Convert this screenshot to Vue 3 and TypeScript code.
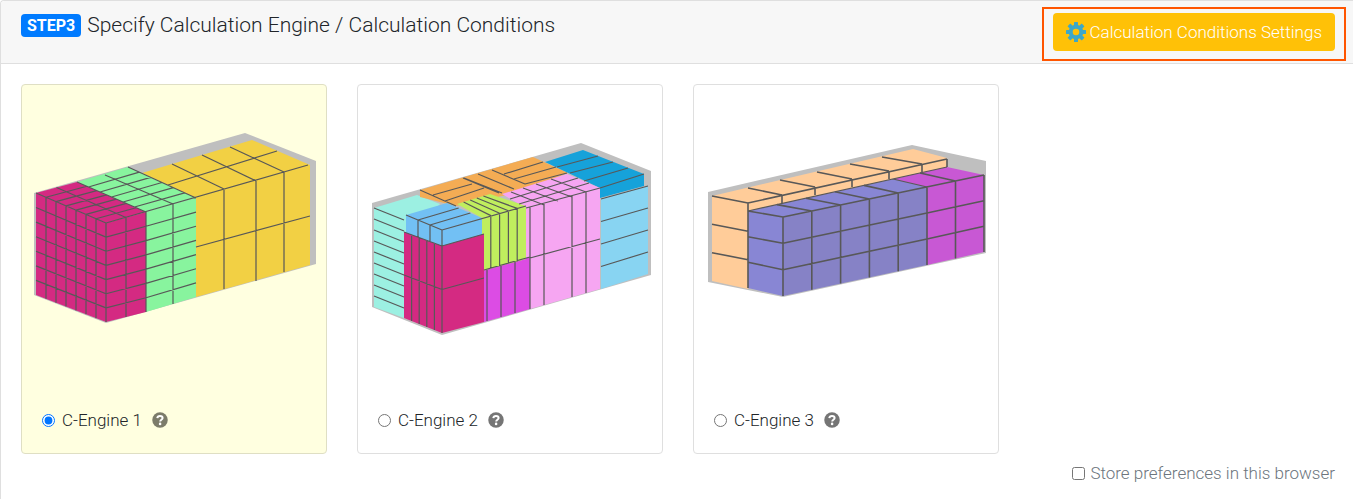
<script setup lang="ts">
import { ref } from 'vue'

type Point = [number, number]
type Quad = [Point, Point, Point, Point]

interface Shape {
  points: string
  fill: string
}

interface Drawing {
  viewBox: string
  shapes: Shape[]
  lines: string
  bold: string
}

interface Engine {
  id: string
  name: string
  drawing: Drawing
}

const colors = {
  wall: '#bfbfbf',
  magenta: '#d42a82',
  green: '#88f49e',
  yellow: '#f2d044',
  teal: '#9cf0e2',
  blue: '#72c0f4',
  orange: '#f4ac54',
  ocean: '#16a2da',
  sky: '#88d4f2',
  lime: '#c0ee5e',
  purple: '#dc4ce4',
  pink: '#f6a6f2',
  peach: '#ffcc99',
  violetTop: '#8886d4',
  violet: '#8682c6',
  orchid: '#c858d4',
}

const poly = (fill: string, ...points: Point[]): Shape => ({
  fill,
  points: points.map((p) => p.join(',')).join(' '),
})

const seg = (a: Point, b: Point): string => `M${a[0]} ${a[1]}L${b[0]} ${b[1]}`

const mix = (a: Point, b: Point, t: number): Point => [
  a[0] + (b[0] - a[0]) * t,
  a[1] + (b[1] - a[1]) * t,
]

// Box edges inside a face, the corners being given clockwise.
function mesh(q: Quad, cols: number, rows: number): string {
  const out: string[] = []
  for (let i = 1; i < cols; i++) {
    out.push(seg(mix(q[0], q[1], i / cols), mix(q[3], q[2], i / cols)))
  }
  for (let j = 1; j < rows; j++) {
    out.push(seg(mix(q[0], q[3], j / rows), mix(q[1], q[2], j / rows)))
  }
  return out.join('')
}

function drawLayered(): Drawing {
  const mLeft: Quad = [[36, 193], [106, 223], [106, 322], [36, 295]]
  const mRight: Quad = [[106, 223], [146, 212], [146, 312], [106, 322]]
  const mTop: Quad = [[36, 193], [77, 182], [146, 212], [106, 223]]
  const gTop: Quad = [[77, 182], [128, 167], [196, 198], [146, 212]]
  const gRight: Quad = [[146, 212], [196, 198], [196, 297], [146, 312]]
  return {
    viewBox: '22 85 304 300',
    shapes: [
      poly(colors.wall, [34, 193], [245, 133], [316, 161], [316, 264], [106, 323], [34, 295]),
      poly(colors.yellow, [142, 173], [252, 140], [310, 165], [310, 265], [196, 297], [196, 198]),
      poly(colors.green, ...gTop),
      poly(colors.green, ...gRight),
      poly(colors.magenta, ...mTop),
      poly(colors.magenta, ...mLeft),
      poly(colors.magenta, ...mRight),
    ],
    lines: [
      mesh(mLeft, 7, 7),
      mesh(mRight, 2, 7),
      mesh(mTop, 2, 7),
      mesh(gTop, 1, 6),
      mesh(gRight, 1, 7),
      seg([105, 175], [173, 204]),
      seg([173, 204], [173, 304]),
      seg([36, 193], [106, 223]),
      seg([106, 223], [308, 165]),
      seg([106, 223], [106, 322]),
      seg([77, 182], [146, 212]),
      seg([128, 167], [196, 198]),
      seg([146, 212], [146, 312]),
      seg([168, 185], [277, 151]),
      seg([172, 164], [224, 189]),
      seg([202, 155], [256, 181]),
      seg([230, 147], [284, 172]),
      seg([224, 189], [224, 289]),
      seg([256, 181], [256, 281]),
      seg([284, 172], [284, 272]),
      seg([196, 247], [310, 216]),
    ].join(''),
    bold: '',
  }
}

function drawMixed(): Drawing {
  const blueLeft: Quad = [[406, 215], [442, 230], [442, 246], [406, 233]]
  const blueTop: Quad = [[406, 215], [447, 203], [482, 218], [442, 230]]
  const mLeft: Quad = [[404, 232], [442, 246], [442, 333], [404, 318]]
  const mRight: Quad = [[442, 246], [484, 234], [484, 322], [442, 333]]
  const limeTop: Quad = [[457, 204], [490, 194], [526, 206], [482, 218]]
  const limeFront: Quad = [[482, 218], [526, 206], [526, 259], [482, 271]]
  const sky: Quad = [[601, 199], [648, 186], [648, 274], [601, 289]]
  const tealLines = Array.from({ length: 9 }, (_, i) => {
    const y = 208 + i * 11
    return seg([374, y], [404, y + 12])
  })
  return {
    viewBox: '358 85 304 300',
    shapes: [
      poly(colors.wall, [372, 203], [581, 143], [651, 171], [651, 275], [442, 335], [372, 307]),
      poly(colors.teal, [374, 208], [417, 195], [440, 204], [406, 240], [404, 318], [374, 307]),
      poly(colors.orange, [420, 190], [533, 157], [568, 173], [520, 192], [456, 206], [420, 197]),
      poly(colors.ocean, [545, 162], [583, 150], [644, 174], [644, 186], [600, 198], [600, 188]),
      poly(colors.sky, ...sky),
      poly(colors.pink, [502, 194], [567, 174], [600, 188], [600, 289], [530, 309], [526, 259], [526, 208]),
      poly(colors.purple, [484, 270], [530, 257], [530, 309], [484, 322]),
      poly(colors.lime, ...limeTop),
      poly(colors.lime, ...limeFront),
      poly(colors.blue, ...blueTop),
      poly(colors.blue, ...blueLeft),
      poly(colors.blue, [442, 230], [482, 218], [482, 235], [442, 246]),
      poly(colors.magenta, ...mLeft),
      poly(colors.magenta, ...mRight),
    ],
    lines: [
      ...tealLines,
      mesh(blueLeft, 3, 1),
      mesh(blueTop, 1, 3),
      seg([406, 215], [442, 230]),
      seg([442, 230], [526, 206]),
      seg([442, 230], [442, 333]),
      seg([404, 232], [442, 246]),
      seg([442, 246], [484, 234]),
      mesh(mLeft, 5, 2),
      mesh(mRight, 1, 2),
      mesh(limeTop, 5, 1),
      mesh(limeFront, 5, 1),
      seg([420, 190], [456, 206]),
      seg([433, 195], [472, 184]),
      seg([445, 201], [484, 188]),
      seg([463, 178], [499, 193]),
      seg([464, 178], [502, 193]),
      seg([478, 174], [514, 189]),
      seg([492, 170], [525, 184]),
      seg([504, 174], [543, 162]),
      seg([514, 179], [556, 167]),
      seg([525, 184], [567, 173]),
      seg([557, 167], [598, 156]),
      seg([570, 173], [613, 162]),
      seg([584, 181], [628, 168]),
      seg([600, 188], [644, 174]),
      mesh(sky, 1, 4),
      seg([601, 199], [648, 186]),
      seg([526, 208], [600, 188]),
      seg([519, 204], [589, 183]),
      seg([510, 199], [578, 178]),
      seg([511, 192], [544, 205]),
      seg([523, 188], [558, 201]),
      seg([536, 184], [572, 197]),
      seg([551, 179], [586, 192]),
      seg([530, 207], [530, 309]),
      seg([544, 203], [544, 305]),
      seg([572, 196], [572, 297]),
      seg([586, 192], [586, 293]),
      seg([530, 258], [600, 239]),
      seg([484, 270], [530, 257]),
      seg([487, 270], [487, 321]),
      seg([501, 266], [501, 317]),
      seg([515, 262], [515, 313]),
    ].join(''),
    bold: '',
  }
}

function drawRows(): Drawing {
  const vTop: Quad = [[748, 211], [893, 179], [927, 187], [783, 217]]
  const vFront: Quad = [[783, 217], [927, 187], [927, 265], [783, 296]]
  const vLeft: Quad = [[748, 211], [783, 217], [783, 296], [748, 288]]
  const oTop: Quad = [[893, 179], [947, 167], [984, 175], [927, 187]]
  const oFront: Quad = [[927, 187], [984, 175], [984, 252], [927, 265]]
  const pLeft: Quad = [[712, 196], [748, 203], [748, 288], [712, 281]]
  const crossings: [Point, Point][] = [
    [[748, 188], [782, 195]],
    [[780, 180], [815, 187]],
    [[817, 172], [852, 179]],
    [[850, 164], [889, 171]],
    [[882, 157], [922, 164]],
  ]
  return {
    viewBox: '694 85 304 300',
    shapes: [
      poly(colors.wall, [708, 192], [912, 145], [986, 161], [986, 253], [783, 297], [708, 282]),
      poly(colors.peach, [712, 196], [913, 149], [947, 158], [947, 168], [748, 212], [748, 289], [712, 281]),
      poly(colors.violetTop, ...vTop),
      poly(colors.violetTop, ...vLeft),
      poly(colors.violet, ...vFront),
      poly(colors.orchid, ...oTop),
      poly(colors.orchid, ...oFront),
    ],
    lines: [
      seg([748, 211], [947, 167]),
      seg([893, 179], [927, 187]),
    ].join(''),
    bold: [
      mesh(pLeft, 1, 3),
      seg([712, 196], [748, 203]),
      seg([748, 203], [947, 159]),
      seg([748, 203], [748, 288]),
      seg([947, 159], [947, 167]),
      ...crossings.map(([a, b]) => seg(a, b) + seg(b, [b[0], b[1] + 8])),
      mesh(vTop, 5, 1),
      mesh(vLeft, 1, 3),
      mesh(vFront, 5, 3),
      mesh(oTop, 2, 1),
      mesh(oFront, 2, 3),
      seg([748, 211], [783, 217]),
      seg([783, 217], [984, 175]),
      seg([783, 217], [783, 296]),
      seg([927, 187], [927, 265]),
      seg([984, 175], [984, 252]),
    ].join(''),
  }
}

const engines: Engine[] = [
  { id: 'engine-1', name: 'C-Engine 1', drawing: drawLayered() },
  { id: 'engine-2', name: 'C-Engine 2', drawing: drawMixed() },
  { id: 'engine-3', name: 'C-Engine 3', drawing: drawRows() },
]

const selected = ref('engine-1')
const store = ref(false)
const teeth = [0, 45, 90, 135, 180, 225, 270, 315]
</script>

<template>
  <section class="panel">
    <header class="panel-header">
      <h1 class="title"><span class="badge">STEP3</span>Specify Calculation Engine / Calculation Conditions</h1>
      <div class="highlight">
        <button type="button" class="settings">
          <svg class="gear" viewBox="0 0 20 20" aria-hidden="true">
            <rect v-for="a in teeth" :key="a" x="8" y="0" width="4" height="4" rx="0.5" :transform="`rotate(${a} 10 10)`" />
            <circle class="ring" cx="10" cy="10" r="5.3" />
          </svg>
          Calculation Conditions Settings
        </button>
      </div>
    </header>

    <div class="panel-body">
      <div class="engines">
        <article v-for="e in engines" :key="e.id" class="card" :class="{ active: selected === e.id }">
          <svg class="drawing" :viewBox="e.drawing.viewBox" aria-hidden="true">
            <polygon v-for="(s, i) in e.drawing.shapes" :key="i" :points="s.points" :fill="s.fill" />
            <path class="edges" :d="e.drawing.lines" />
            <path class="edges bold" :d="e.drawing.bold" />
          </svg>
          <div class="choice">
            <input :id="e.id" v-model="selected" type="radio" name="engine" :value="e.id" />
            <label :for="e.id">{{ e.name }}</label>
            <svg class="help" viewBox="0 0 16 16" aria-hidden="true">
              <circle cx="8" cy="8" r="7.75" />
              <path d="M5.3 6.1C5.5 4.5 6.6 3.9 8 3.9C9.5 3.9 10.6 4.7 10.6 6C10.6 7.8 8.2 7.7 8.2 9.5" />
              <circle class="dot" cx="8.1" cy="11.9" r="1.3" />
            </svg>
          </div>
        </article>
      </div>
      <div class="store">
        <input id="store" v-model="store" type="checkbox" />
        <label for="store">Store preferences in this browser</label>
      </div>
    </div>
  </section>
</template>

<style>
body {
  margin: 0;
  background: #fff;
}
</style>

<style scoped>
.panel {
  border: 1px solid #dfdfdf;
  border-right: 0;
  border-bottom: 0;
  border-radius: 4px 0 0 0;
  color: #212529;
  font-family: Roboto, "Noto Sans", sans-serif;
  font-size: 17px;
  font-weight: 300;
  line-height: 24px;
}

.panel-header {
  display: flex;
  justify-content: space-between;
  align-items: flex-start;
  padding: 6px 7px 2px 20px;
  background: #f7f7f7;
  border-bottom: 1px solid #dfdfdf;
  border-radius: 4px 0 0 0;
}

.title {
  display: flex;
  align-items: center;
  gap: 6px;
  margin: 6px 0 0;
  font-size: 21px;
  font-weight: 300;
  line-height: 24px;
}

.badge {
  padding: 0 6px;
  border-radius: 4px;
  background: #007bff;
  color: #fff;
  font-size: 16px;
  font-weight: 700;
  line-height: 23px;
}

.highlight {
  padding: 4px 9px 8px;
  border: 2px solid #ff5500;
}

.settings {
  display: flex;
  align-items: center;
  gap: 4px;
  padding: 7px 13px;
  border: 0;
  border-radius: 4px;
  background: #ffc107;
  color: #fff;
  font: inherit;
}

.gear {
  width: 20px;
  height: 20px;
  fill: #3da8c8;
}

.gear .ring {
  fill: none;
  stroke: #3da8c8;
  stroke-width: 4;
}

.panel-body {
  padding: 20px 18px 14px 20px;
}

.engines {
  display: grid;
  grid-template-columns: repeat(4, 1fr);
  gap: 30px;
}

.card {
  border: 1px solid #dfdfdf;
  border-radius: 4px;
}

.card.active {
  background: #ffffe0;
  border-color: #dfdfc4;
}

.drawing {
  display: block;
  width: 100%;
}

.edges {
  fill: none;
  stroke: #585858;
  stroke-width: 1.2;
}

.edges.bold {
  stroke-width: 1.6;
}

.choice {
  display: flex;
  align-items: center;
  padding: 23px 20px 21px;
}

.choice input {
  width: 13px;
  height: 13px;
  margin: 0 7px 0 0;
}

.help {
  width: 16px;
  height: 16px;
  margin-left: 10px;
  fill: #757575;
}

.help path {
  fill: none;
  stroke: #fff;
  stroke-width: 2;
}

.help .dot {
  fill: #fff;
}

.active .help {
  fill: #7c7c6a;
}

.store {
  display: flex;
  justify-content: flex-end;
  align-items: center;
  gap: 5px;
  margin-top: 7px;
  color: #6c757d;
}

.store input {
  width: 13px;
  height: 13px;
  margin: 0;
}
</style>
